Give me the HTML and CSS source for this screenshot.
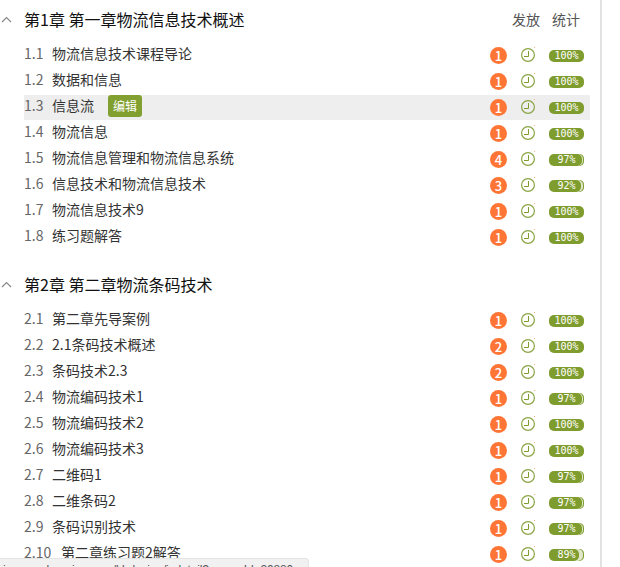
FILE: index.html
```html
<!DOCTYPE html>
<html lang="zh">
<head>
<meta charset="utf-8">
<title>课程章节</title>
<link rel="stylesheet" href="styles.css">
</head>
<body>
<main class="page">
  <section class="chapter">
    <header class="chapter-head">
      <svg class="chev" viewBox="0 0 11 7"><path d="M1 6 5.5 1.5 10 6"/></svg>
      <h2 class="chapter-title">第1章 第一章物流信息技术概述</h2>
      <span class="col col-a">发放</span><span class="col col-b">统计</span>
    </header>
    <ul class="rows">
      <li class="row"><span class="num">1.1</span><span class="name">物流信息技术课程导论</span><span class="badge">1</span><svg class="clock" viewBox="0 0 16 16"><circle class="ring" cx="7" cy="9" r="6.4"/><path class="hand" d="M7.5 5V10.5H3"/><rect class="spark" x="13" y="1" width="1" height="1"/></svg><span class="pct">100%</span></li>
      <li class="row"><span class="num">1.2</span><span class="name">数据和信息</span><span class="badge">1</span><svg class="clock" viewBox="0 0 16 16"><circle class="ring" cx="7" cy="9" r="6.4"/><path class="hand" d="M7.5 5V10.5H3"/><rect class="spark" x="13" y="1" width="1" height="1"/></svg><span class="pct">100%</span></li>
      <li class="row active"><span class="num">1.3</span><span class="name">信息流</span><span class="edit">编辑</span><span class="badge">1</span><svg class="clock" viewBox="0 0 16 16"><circle class="ring" cx="7" cy="9" r="6.4"/><path class="hand" d="M7.5 5V10.5H3"/><rect class="spark" x="13" y="1" width="1" height="1"/></svg><span class="pct">100%</span></li>
      <li class="row"><span class="num">1.4</span><span class="name">物流信息</span><span class="badge">1</span><svg class="clock" viewBox="0 0 16 16"><circle class="ring" cx="7" cy="9" r="6.4"/><path class="hand" d="M7.5 5V10.5H3"/><rect class="spark" x="13" y="1" width="1" height="1"/></svg><span class="pct">100%</span></li>
      <li class="row"><span class="num">1.5</span><span class="name">物流信息管理和物流信息系统</span><span class="badge">4</span><svg class="clock" viewBox="0 0 16 16"><circle class="ring" cx="7" cy="9" r="6.4"/><path class="hand" d="M7.5 5V10.5H3"/><rect class="spark" x="13" y="1" width="1" height="1"/></svg><span class="pct part-97">97%</span></li>
      <li class="row"><span class="num">1.6</span><span class="name">信息技术和物流信息技术</span><span class="badge">3</span><svg class="clock" viewBox="0 0 16 16"><circle class="ring" cx="7" cy="9" r="6.4"/><path class="hand" d="M7.5 5V10.5H3"/><rect class="spark" x="13" y="1" width="1" height="1"/></svg><span class="pct part-92">92%</span></li>
      <li class="row"><span class="num">1.7</span><span class="name">物流信息技术9</span><span class="badge">1</span><svg class="clock" viewBox="0 0 16 16"><circle class="ring" cx="7" cy="9" r="6.4"/><path class="hand" d="M7.5 5V10.5H3"/><rect class="spark" x="13" y="1" width="1" height="1"/></svg><span class="pct">100%</span></li>
      <li class="row"><span class="num">1.8</span><span class="name">练习题解答</span><span class="badge">1</span><svg class="clock" viewBox="0 0 16 16"><circle class="ring" cx="7" cy="9" r="6.4"/><path class="hand" d="M7.5 5V10.5H3"/><rect class="spark" x="13" y="1" width="1" height="1"/></svg><span class="pct">100%</span></li>
    </ul>
  </section>
  <section class="chapter">
    <header class="chapter-head">
      <svg class="chev" viewBox="0 0 11 7"><path d="M1 6 5.5 1.5 10 6"/></svg>
      <h2 class="chapter-title">第2章 第二章物流条码技术</h2>
    </header>
    <ul class="rows">
      <li class="row"><span class="num">2.1</span><span class="name">第二章先导案例</span><span class="badge">1</span><svg class="clock" viewBox="0 0 16 16"><circle class="ring" cx="7" cy="9" r="6.4"/><path class="hand" d="M7.5 5V10.5H3"/><rect class="spark" x="13" y="1" width="1" height="1"/></svg><span class="pct">100%</span></li>
      <li class="row"><span class="num">2.2</span><span class="name">2.1条码技术概述</span><span class="badge">2</span><svg class="clock" viewBox="0 0 16 16"><circle class="ring" cx="7" cy="9" r="6.4"/><path class="hand" d="M7.5 5V10.5H3"/><rect class="spark" x="13" y="1" width="1" height="1"/></svg><span class="pct">100%</span></li>
      <li class="row"><span class="num">2.3</span><span class="name">条码技术2.3</span><span class="badge">2</span><svg class="clock" viewBox="0 0 16 16"><circle class="ring" cx="7" cy="9" r="6.4"/><path class="hand" d="M7.5 5V10.5H3"/><rect class="spark" x="13" y="1" width="1" height="1"/></svg><span class="pct">100%</span></li>
      <li class="row"><span class="num">2.4</span><span class="name">物流编码技术1</span><span class="badge">1</span><svg class="clock" viewBox="0 0 16 16"><circle class="ring" cx="7" cy="9" r="6.4"/><path class="hand" d="M7.5 5V10.5H3"/><rect class="spark" x="13" y="1" width="1" height="1"/></svg><span class="pct part-97">97%</span></li>
      <li class="row"><span class="num">2.5</span><span class="name">物流编码技术2</span><span class="badge">1</span><svg class="clock" viewBox="0 0 16 16"><circle class="ring" cx="7" cy="9" r="6.4"/><path class="hand" d="M7.5 5V10.5H3"/><rect class="spark" x="13" y="1" width="1" height="1"/></svg><span class="pct">100%</span></li>
      <li class="row"><span class="num">2.6</span><span class="name">物流编码技术3</span><span class="badge">1</span><svg class="clock" viewBox="0 0 16 16"><circle class="ring" cx="7" cy="9" r="6.4"/><path class="hand" d="M7.5 5V10.5H3"/><rect class="spark" x="13" y="1" width="1" height="1"/></svg><span class="pct">100%</span></li>
      <li class="row"><span class="num">2.7</span><span class="name">二维码1</span><span class="badge">1</span><svg class="clock" viewBox="0 0 16 16"><circle class="ring" cx="7" cy="9" r="6.4"/><path class="hand" d="M7.5 5V10.5H3"/><rect class="spark" x="13" y="1" width="1" height="1"/></svg><span class="pct part-97">97%</span></li>
      <li class="row"><span class="num">2.8</span><span class="name">二维条码2</span><span class="badge">1</span><svg class="clock" viewBox="0 0 16 16"><circle class="ring" cx="7" cy="9" r="6.4"/><path class="hand" d="M7.5 5V10.5H3"/><rect class="spark" x="13" y="1" width="1" height="1"/></svg><span class="pct part-97">97%</span></li>
      <li class="row"><span class="num">2.9</span><span class="name">条码识别技术</span><span class="badge">1</span><svg class="clock" viewBox="0 0 16 16"><circle class="ring" cx="7" cy="9" r="6.4"/><path class="hand" d="M7.5 5V10.5H3"/><rect class="spark" x="13" y="1" width="1" height="1"/></svg><span class="pct part-97">97%</span></li>
      <li class="row"><span class="num num-wide">2.10</span><span class="name">第二章练习题2解答</span><span class="badge">1</span><svg class="clock" viewBox="0 0 16 16"><circle class="ring" cx="7" cy="9" r="6.4"/><path class="hand" d="M7.5 5V10.5H3"/><rect class="spark" x="13" y="1" width="1" height="1"/></svg><span class="pct part-89">89%</span></li>
    </ul>
  </section>
</main>
<div class="status">i.mooc.chaoxing.com/kbdesign/jsdetail?courseId=20880</div>
</body>
</html>
```
FILE: styles.css
```css
* { box-sizing: border-box; }
html, body { margin: 0; height: 100%; overflow: hidden; background: #fff; }
body { font-family: "Noto Sans CJK SC", "Open Sans", sans-serif; color: #333; position: relative; }
.page { width: 602px; height: 567px; border-right: 2px solid #e2e2e2; padding: 5px 10px 0 0; }
.chapter + .chapter { margin-top: 20px; }
.chapter-head { display: flex; align-items: center; height: 28px; margin-bottom: 10px; }
.chev { width: 11px; height: 7px; margin-left: 1px; margin-right: 12px; fill: none; stroke: #888; stroke-width: 1.2; }
.chapter-title { flex: 1; margin: 0; font-size: 16px; line-height: 28px; font-weight: 400; color: #111; }
.col { font-size: 14px; color: #555; }
.col-a { margin-right: 12px; }
.col-b { margin-right: 10px; }
.rows { list-style: none; margin: 0; padding: 0 0 0 24px; }
.row { display: flex; align-items: center; height: 25px; margin-top: 1px; }
.active { background: #eee; }
.num { width: 28px; padding-bottom: 5px; font-size: 14px; color: #666; flex: none; }
.num-wide { width: 37px; }
.name { padding-bottom: 5px; font-size: 14px; color: #333; }
.edit { align-self: flex-start; margin-left: 14px; width: 34px; height: 22px; border-radius: 3px; background: #82a030; color: #fff; font-size: 12px; line-height: 22px; text-align: center; }
.badge { margin-left: auto; width: 17px; height: 17px; border-radius: 50%; background: #ff7535; color: #fff; font-size: 13px; font-weight: 500; line-height: 17px; text-align: center; }
.clock { flex: none; width: 16px; height: 16px; margin: -3px -1px 0 14px; fill: none; }
.ring { stroke: #8aa545; stroke-width: 1.2; }
.hand { stroke: #7f9d2f; stroke-width: 1; }
.spark { fill: #ffb080; }
.pct { margin-left: 13px; margin-right: 6px; width: 35px; height: 12px; border-radius: 5px; background: #7f9d2f; color: #fff; font-family: "DejaVu Sans Mono", monospace; font-size: 10px; line-height: 12px; text-align: center; }
.part-97 { box-shadow: inset -1px 0 0 #7f9d2f, inset -2px 0 0 #dfe6c9; }
.part-92 { box-shadow: inset -1px 0 0 #7f9d2f, inset -3px 0 0 #dfe6c9; }
.part-89 { box-shadow: inset -1px 0 0 #7f9d2f, inset -5px 0 0 #dfe6c9; }
.status { position: absolute; left: 0; bottom: -9px; width: 309px; height: 18px; padding: 3px 0 0 3px; background: #f1f1f1; border: 1px solid #e4e4e4; border-left: 0; border-radius: 0 4px 0 0; font-family: "Liberation Sans", sans-serif; font-size: 12px; letter-spacing: -0.15px; line-height: 16px; color: #555; white-space: nowrap; overflow: hidden; }
```
